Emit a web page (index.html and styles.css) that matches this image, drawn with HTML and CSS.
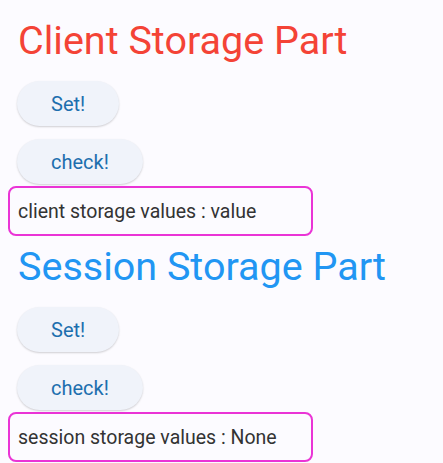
FILE: index.html
```html
<!DOCTYPE html>
<html lang="en">
<head>
    <meta charset="UTF-8">
    <meta name="viewport" content="width=device-width, initial-scale=1.0">
    <title>Storage Demo</title>
    <link rel="stylesheet" href="styles.css">
</head>
<body>
    <div class="page">
        <h1 class="title title-client">Client Storage Part</h1>
        <button class="pill">Set!</button>
        <button class="pill">check!</button>
        <div class="result">client storage values : value</div>

        <h1 class="title title-session">Session Storage Part</h1>
        <button class="pill">Set!</button>
        <button class="pill">check!</button>
        <div class="result">session storage values : None</div>
    </div>
</body>
</html>
```

FILE: styles.css
```css
* {
    margin: 0;
    padding: 0;
    box-sizing: border-box;
    font-family: Roboto, 'Noto Sans', sans-serif;
}

body {
    background: #fcfbff;
    height: 463px;
    overflow: hidden;
}

.page {
    display: flex;
    flex-direction: column;
    align-items: flex-start;
    padding: 13px 0 0 8px;
}

.title {
    font-size: 39.5px;
    font-weight: 400;
    line-height: 56px;
    margin: 0 0 12px 10px;
}

.title-client {
    color: #f44336;
}

.title-session {
    color: #2196f3;
    margin-top: 3px;
}

.pill {
    height: 45px;
    margin-left: 9px;
    padding: 0 34px;
    border: none;
    border-radius: 23px;
    background: #f0f3fa;
    color: #1d6fae;
    font-size: 20px;
    box-shadow: 0 1px 2px rgba(0, 0, 0, 0.18);
}

.pill + .pill {
    margin-top: 13px;
}

.result {
    width: 305px;
    height: 50px;
    margin-top: 2px;
    padding-left: 8px;
    display: flex;
    align-items: center;
    border: 2px solid #ea34d6;
    border-radius: 8px;
    color: #333333;
    font-size: 19.5px;
}
```
